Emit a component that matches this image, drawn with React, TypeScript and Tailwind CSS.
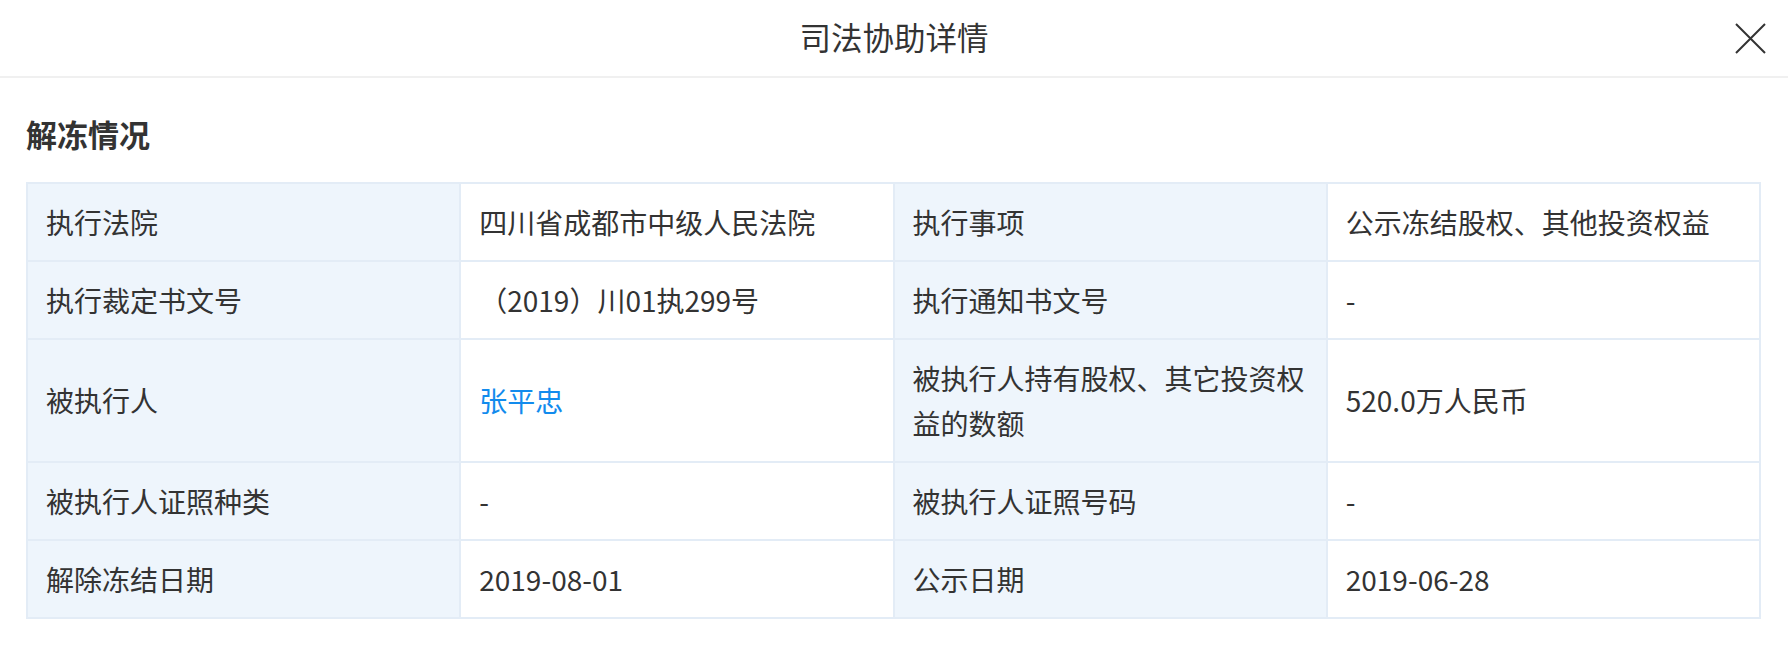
import React from 'react';

type Cell = { label: string; value: string; link?: boolean };

const rows: Cell[][] = [
  [
    { label: '执行法院', value: '四川省成都市中级人民法院' },
    { label: '执行事项', value: '公示冻结股权、其他投资权益' },
  ],
  [
    { label: '执行裁定书文号', value: '（2019）川01执299号' },
    { label: '执行通知书文号', value: '-' },
  ],
  [
    { label: '被执行人', value: '张平忠', link: true },
    { label: '被执行人持有股权、其它投资权益的数额', value: '520.0万人民币' },
  ],
  [
    { label: '被执行人证照种类', value: '-' },
    { label: '被执行人证照号码', value: '-' },
  ],
  [
    { label: '解除冻结日期', value: '2019-08-01' },
    { label: '公示日期', value: '2019-06-28' },
  ],
];

const font = { fontFamily: '"Noto Sans CJK SC", "Noto Sans", sans-serif' };

export default function App() {
  return (
    <div className="w-[1788px] h-[646px] bg-white text-[#333]" style={font}>
      {/* Header */}
      <div className="relative h-[78px] flex items-center justify-center border-b-2 border-[#f0f0f0]">
        <h1 className="text-[31.5px] leading-[40px] pb-[4px]">司法协助详情</h1>
        <button className="absolute right-[22px] top-[22px] w-[32px] h-[32px] flex items-center justify-center">
          <svg width="31" height="31" viewBox="0 0 31 31" fill="none">
            <path d="M1 1 L30 30 M30 1 L1 30" stroke="#333" strokeWidth="2" />
          </svg>
        </button>
      </div>

      {/* Body */}
      <div className="px-[26px]">
        <h2 className="mt-[36px] mb-[28px] text-[31px] leading-[40px] font-semibold">解冻情况</h2>

        <div className="grid grid-cols-4 gap-[2px] p-[2px] bg-[#e3ecf6] w-[1735px]">
          {rows.map((row, i) => (
            <React.Fragment key={i}>
              {row.map((c, j) => (
                <React.Fragment key={j}>
                  <div className="bg-[#eef5fc] px-[18px] py-[15.5px] text-[28px] leading-[45px] flex items-center">
                    <span>{c.label}</span>
                  </div>
                  <div className="bg-white px-[18px] py-[15.5px] text-[28px] leading-[45px] flex items-center">
                    <span className={c.link ? 'text-[#128bed]' : ''}>{c.value}</span>
                  </div>
                </React.Fragment>
              ))}
            </React.Fragment>
          ))}
        </div>
      </div>
    </div>
  );
}
